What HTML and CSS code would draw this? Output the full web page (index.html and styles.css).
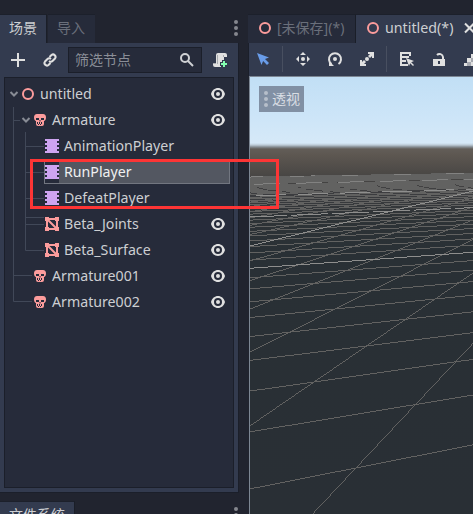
FILE: index.html
```html
<!DOCTYPE html>
<html lang="zh-CN">
<head>
<meta charset="utf-8">
<title>untitled</title>
<link rel="stylesheet" href="styles.css">
</head>
<body>
<svg class="defs" aria-hidden="true">
  <symbol id="eye" viewBox="0 0 16 16"><path fill="#e0e0e0" fill-rule="evenodd" d="M8 2C4.800 2 1.900 4.300 1 8c.9 3.700 3.800 6 7 6s6.100-2.300 7-6c-.9-3.700-3.800-6-7-6zm0 2a4 4 0 1 1 0 8 4 4 0 0 1 0-8zm0 2a2 2 0 1 0 0 4 2 2 0 0 0 0-4z"/></symbol>
  <symbol id="ring" viewBox="0 0 16 16"><circle cx="8" cy="8" r="5" fill="none" stroke="#fc9c9c" stroke-width="2"/></symbol>
  <symbol id="skull" viewBox="0 0 16 16"><path fill="#fc9c9c" fill-rule="evenodd" d="M5 2C3 2 2 3.500 2 5.500 2 7.500 3 9 4 9v3q0 2 2 2h4q2 0 2-2V9c1 0 2-1.500 2-3.500C14 3.500 13 2 11 2zM4 6h3v2H4zm5 0h3v2H9zM7.500 8h1v1.500h-1zM5 10h1v2H5zm2 0h1v2H7zm2 0h1v2H9zM6 12h1v1H6zm2 0h1v1H8z"/></symbol>
  <symbol id="film" viewBox="0 0 16 16"><path fill="#cea4f1" fill-rule="evenodd" d="M1 1h14v14H1zM1 3v2h2V3zm0 4v2h2V7zm0 4v2h2v-2zm12-8v2h2V3zm0 4v2h2V7zm0 4v2h2v-2z"/></symbol>
  <symbol id="mesh" viewBox="0 0 16 16"><path fill="none" stroke="#fc9c9c" stroke-width="2" d="M3 3h10v10H3zl10 10"/><path fill="#fc9c9c" d="M1 1h4v4H1zm10 0h4v4h-4zM1 11h4v4H1zm10 0h4v4h-4z"/></symbol>
  <symbol id="arrow" viewBox="0 0 12 12"><path fill="none" stroke="#888c95" stroke-width="2" d="M2.500 4 6 7.500 9.500 4"/></symbol>
</svg>
<div class="editor">
  <aside class="docks">
    <div class="tabs">
      <div class="tab active scene">场景</div>
      <div class="tab import">导入</div>
      <span class="dots"><i></i><i></i><i></i></span>
    </div>
    <section class="dock">
      <div class="tools">
        <svg class="add" width="16" height="16"><path d="M7 1h2v6h6v2H9v6H7V9H1V7h6z" fill="#e0e0e0"/></svg>
        <svg class="link" width="16" height="16"><g fill="none" stroke="#e0e0e0" stroke-width="2"><path d="M7.500 5 9.500 3a2.500 2.500 0 0 1 3.500 3.500L10.500 9Q9 10.500 7 9M8.500 11l-2 2A2.500 2.500 0 0 1 3 9.500L5.500 7Q7 5.500 9 7"/></g></svg>
        <div class="search"><span>筛选节点</span><svg width="16" height="16"><g fill="none" stroke="#cfd1d4" stroke-width="2"><circle cx="6" cy="6" r="4"/><path d="m9 9 5 5"/></g></svg></div>
        <svg class="script" width="16" height="16"><path fill="#e0e0e0" d="M6 1q-2 0-2 2v8H1v2q0 2 2 2h6v-4h3V5h3V3q0-2-2-2z"/><path fill="#a7aaae" d="M5 3h1v9H5zm6 0h1v2h-1zM1 11h3v1H1z"/><path fill="#323b4d" d="M10 8h4v1h2v7H9v-2H8v-4h2z"/><path fill="#84ffb1" d="M11 9h2v2h2v2h-2v2h-2v-2H9v-2h2z"/></svg>
      </div>
      <div class="tree">
        <svg class="guides" width="60" height="240"><path fill="none" stroke="#414858" d="M8.500 29v194.500H27M8.500 42.500H15M8.500 197.500H27M20.500 54v85.500H39M20.500 68.500H39M20.500 94.500H39M20.500 120.500H39M20.500 139v33.500H39M20.500 146.500H39"/></svg>
        <div class="row l0"><svg class="fold"><use href="#arrow"/></svg><svg class="icon"><use href="#ring"/></svg><span>untitled</span><svg class="eye"><use href="#eye"/></svg></div>
        <div class="row l1"><svg class="fold"><use href="#arrow"/></svg><svg class="icon"><use href="#skull"/></svg><span>Armature</span><svg class="eye"><use href="#eye"/></svg></div>
        <div class="row l2"><svg class="icon"><use href="#film"/></svg><span>AnimationPlayer</span></div>
        <div class="row l2 selected"><svg class="icon"><use href="#film"/></svg><span>RunPlayer</span></div>
        <div class="row l2"><svg class="icon"><use href="#film"/></svg><span>DefeatPlayer</span></div>
        <div class="row l2"><svg class="icon"><use href="#mesh"/></svg><span>Beta_Joints</span><svg class="eye"><use href="#eye"/></svg></div>
        <div class="row l2"><svg class="icon"><use href="#mesh"/></svg><span>Beta_Surface</span><svg class="eye"><use href="#eye"/></svg></div>
        <div class="row l1 leaf"><svg class="icon"><use href="#skull"/></svg><span>Armature001</span><svg class="eye"><use href="#eye"/></svg></div>
        <div class="row l1 leaf"><svg class="icon"><use href="#skull"/></svg><span>Armature002</span><svg class="eye"><use href="#eye"/></svg></div>
      </div>
    </section>
    <div class="tabs lower">
      <div class="tab active files">文件系统</div>
      <span class="dots"><i></i><i></i><i></i></span>
    </div>
  </aside>
  <main class="main">
    <div class="tabs">
      <div class="tab doc first"><svg class="icon"><use href="#ring"/></svg><span>[未保存](*)</span></div>
      <div class="tab doc active"><svg class="icon"><use href="#ring"/></svg><span>untitled(*)</span><svg class="close" width="12" height="12"><path d="m2 1.500 9 9m0-9-9 9" stroke="#e0e0e0" stroke-width="2"/></svg></div>
    </div>
    <div class="toolbar">
      <svg class="t1" width="16" height="16"><path fill="#699ce8" d="m2 2 4.500 12 1.600-4.100 3.900 4 2-2-4-3.900L14 6.500z"/></svg>
      <i class="sep"></i>
      <svg class="t2" width="16" height="16"><path fill="#e0e0e0" d="m8 1 3 3H5zM8 15l3-3H5zM1 8l3-3v6zm14 0-3-3v6z"/><circle cx="8" cy="8" r="2" fill="#e0e0e0"/></svg>
      <svg class="t3" width="16" height="16"><path fill="none" stroke="#e0e0e0" stroke-width="2" d="M4.500 13A6 6 0 1 1 11.500 13"/><path fill="#e0e0e0" d="M2 10v5h5z"/><circle cx="8" cy="8" r="2" fill="#e0e0e0"/></svg>
      <svg class="t4" width="16" height="16"><path fill="#e0e0e0" d="M9 1h6v6h-2V5l-2 2-2-2 2-2H9zM1 9h2v2l2-2 2 2-2 2h2v2H1z"/><circle cx="8" cy="8" r="2" fill="#e0e0e0"/></svg>
      <i class="sep"></i>
      <svg class="t5" width="16" height="16"><path fill="#e0e0e0" fill-rule="evenodd" d="M1 1h11v4h-2V3H3v2h7v2H3v2h4v2H3v2h6v2H1z"/><path fill="#e0e0e0" d="m7 7 3 8 1.200-2.800L14 15l1-1-2.800-2.800L15 10z"/></svg>
      <svg class="t6" width="16" height="16"><path fill="none" stroke="#e0e0e0" stroke-width="2" d="M6 4a3.500 3.500 0 0 1 6 2v3"/><path fill="#e0e0e0" fill-rule="evenodd" d="M2 8h12v7H2zm5 2v3h2v-3z"/></svg>
      <svg class="t7" width="16" height="16"><path fill="#a5a8af" d="M4 8h4v4H4zm4-4h8v8H8zM4 12h4v3H4z"/><path fill="#e0e0e0" d="M1 12h3v3H1zm3-5h4v4H4zm4-4h4v4H8zM8 11h4v4H8z"/></svg>
    </div>
    <div class="viewport">
      <canvas id="grid" width="223" height="437"></canvas>
      <div class="view-menu"><span class="dots"><i></i><i></i><i></i></span>透视</div>
    </div>
  </main>
  <div class="marker"></div>
</div>
<script src="grid.js"></script>
</body>
</html>
```
FILE: styles.css
```css
* { box-sizing: border-box; }
body {
  margin: 0;
  overflow: hidden;
  background: #202531;
  color: #cdcfd2;
  font: 14.2px/20px "Noto Sans", "Noto Sans CJK SC", sans-serif;
}
svg { display: block; flex: none; }
.defs { display: none; }
.editor { position: relative; display: flex; width: 473px; height: 514px; overflow: hidden; background: #21242f; }
.docks { width: 248px; flex: none; }
.tabs { display: flex; height: 43px; padding-top: 14px; }
.tab { height: 29px; background: #262b3a; color: #6a6f7b; border-top: 1px solid #1c202b; white-space: nowrap; font-size: 14px; }
.tab.active { background: #333b4f; color: #cdcfd2; }
.scene { width: 47px; padding: 3px 0 0 9px; border-right: 1px solid #1a1e28; }
.import { width: 47px; margin-left: 1px; padding: 3px 0 0 9px; }
.docks .dots { margin-left: auto; margin-right: 10px; padding-top: 6px; }
.dots { display: flex; flex-direction: column; gap: 2px; }
.dots i { width: 4px; height: 4px; flex: none; border-radius: 2px; background: #85878e; }
.dock { width: 239px; height: 450px; padding: 4px 4px 4px; background: #333b4f; border: solid #1b1f2a; border-width: 0 1px 1px 0; display: flex; flex-direction: column; }
.tools { display: flex; align-items: center; height: 26px; }
.add { margin-left: 6px; }
.link { margin-left: 16px; }
.search { display: flex; align-items: center; width: 134px; height: 26px; margin-left: 10px; padding: 0 6px 0 6px; background: #262b3a; border: 1px solid #1b1f2a; color: #8a8e97; font-size: 14px; }
.search svg { margin-left: auto; }
.script { margin-left: 10px; }
.tree { position: relative; width: 230px; height: 411px; margin-top: 4px; padding: 3px 3px 0 4px; background: #262b3a; border: 1px solid #1b1f2a; }
.guides { position: absolute; left: 0; top: 0; }
.row { position: relative; display: flex; align-items: center; height: 26px; padding-right: 4px; }
.row span { margin-left: 4px; }
.icon { width: 16px; height: 16px; }
.fold { width: 12px; height: 12px; margin-left: -1px; }
.l1 { padding-left: 12px; }
.l1.leaf { padding-left: 23px; }
.l2 { padding-left: 35px; }
.eye { width: 16px; height: 16px; margin-left: auto; }
.selected { height: 24px; margin: 1px 0 1px 35px; padding-left: 0; background: linear-gradient(90deg, #262b3a 15px, #535761 15px); outline: 1px solid #727680; outline-offset: -1px; color: #f0f0f1; }
.lower { padding-top: 8px; height: 21px; overflow: hidden; }
.files { width: 75px; padding: 3px 0 0 9px; border-right: 1px solid #1a1e28; }
.lower .dots { padding-top: 6px; }
.main { width: 225px; flex: none; }
.doc { display: flex; align-items: flex-start; padding-top: 3px; font-size: 14.25px; }
.doc .icon { margin: 2px 0 0 9px; }
.doc.first { width: 108px; border-right: 1px solid #1a1e28; }
.doc.first span { margin-left: 4px; font-size: 14px; }
.doc.active { width: 117px; }
.doc.active span { margin-left: 4px; }
.close { margin: 4px 0 0 10px; }
.toolbar { display: flex; align-items: flex-start; height: 33px; padding: 8px 0 0 6px; background: #333b4f; border-left: 1px solid #1b1f2a; overflow: hidden; }
.sep { width: 1px; height: 26px; margin-top: -5px; background: #484f60; flex: none; }
.t1 { margin-right: 11px; }
.t2 { margin-left: 12px; }
.t3, .t4 { margin-left: 16px; }
.t4 { margin-right: 11px; }
.t5 { margin-left: 12px; }
.t6 { margin-left: 16px; }
.t7 { margin-left: 16px; }
.viewport { position: relative; height: 438px; margin-left: 1px; border: solid #7d8794; border-width: 1px 0 0 1px; }
.viewport canvas { display: block; }
.view-menu { position: absolute; left: 9px; top: 9px; width: 45px; height: 26px; display: flex; align-items: center; gap: 4px; padding: 0 0 1px 5px; background: #8190a4; color: #d8dde3; font-size: 14px; white-space: nowrap; }
.view-menu .dots i { background: #b6bfca; }
.marker { position: absolute; left: 30px; top: 159px; width: 249px; height: 50px; border: 3px solid #fd3535; }
```
FILE: grid.js
```js
const canvas = document.getElementById('grid');
const ctx = canvas.getContext('2d');
const W = canvas.width;
const H = canvas.height;

// Sky, haze, and ground
const sky = ctx.createLinearGradient(0, 0, 0, H);
[[0, '#c1dff5'], [40, '#cde5f8'], [66, '#d6e9f8'], [68, '#bdcbd7'], [70, '#858c92'],
 [72, '#625d58'], [78, '#5d5751'], [99, '#484644'], [118, '#3b3c3f'], [140, '#2e3336'],
 [175, '#293035'], [H, '#292f35']].forEach(([y, c]) => sky.addColorStop(y / H, c));
ctx.fillStyle = sky;
ctx.fillRect(0, 0, W, H);

const HORIZON = 68;
const VANISH_X = 410;

// Far edge of the grid plane, above which nothing is drawn
const farEdge = x => 100 - 3.7 * x / W;

// A dash of [on, off, phase] breaks up distant lines
function plot(yLeft, yRight, color, dash) {
  ctx.fillStyle = color;
  const slope = (yRight - yLeft) / W;
  if (Math.abs(slope) > 1) {
    for (let y = 0; y < H; y++) {
      const x = Math.floor((y - yLeft) / slope) - 1;
      if (x >= 0 && x < W) ctx.fillRect(x, y, 1, 1);
    }
    return;
  }
  for (let x = 0; x < W; x++) {
    const y = Math.floor(yLeft + slope * (x + 0.5));
    if (y < Math.floor(farEdge(x))) continue;
    if (dash && (x + dash[2]) % (dash[0] + dash[1]) >= dash[0]) continue;
    ctx.fillRect(x, y, 1, 1);
  }
}

function cross(n, color, dash) {
  plot(HORIZON + 1 / (0.00811 + n * 0.000578), HORIZON + 1 / (0.00932 + n * 0.000665), color, dash);
}

function depth(n, color) {
  const slope = 1 / (4.06 + n * 0.52);
  plot(HORIZON + VANISH_X * slope, HORIZON + (VANISH_X - W) * slope, color);
}

const MINOR = '#626261';
const MAJOR = '#8e8e8d';
for (let n = -9; n <= 40; n++) if (n % 10) cross(n, MINOR);
for (let n = -6; n <= 16; n++) if (n % 10) depth(n, MINOR);
cross(-8 - 8 / 100, 'transparent');
cross(40, MINOR);
cross(0, MAJOR);
cross(10, MAJOR, [37, 4, 0]);
cross(20, MAJOR, [30, 12, 36]);
cross(30, '#828281', [26, 16, 38]);
cross(40, '#828281', [25, 27, 12]);
depth(0, MAJOR);
```
